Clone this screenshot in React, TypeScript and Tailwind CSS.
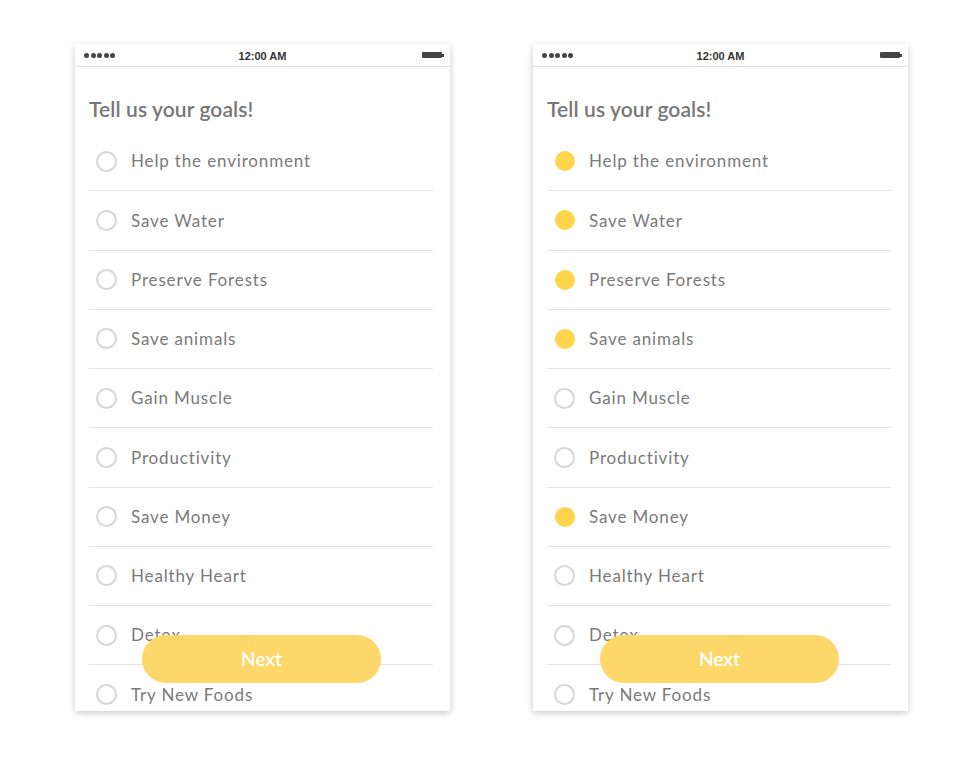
import React from "react";

const goals = [
  "Help the environment",
  "Save Water",
  "Preserve Forests",
  "Save animals",
  "Gain Muscle",
  "Productivity",
  "Save Money",
  "Healthy Heart",
  "Detox",
  "Try New Foods",
];

function Phone({ selected }: { selected: boolean[] }) {
  return (
    <div className="relative w-[375px] h-[667px] bg-white overflow-hidden shadow-[0_2px_7px_rgba(0,0,0,0.22)] shrink-0">
      <div className="h-[23px] border-b border-[#e2e2e2] flex items-center justify-between pl-[9px] pr-[6px] relative">
        <div className="flex gap-[1.5px]">
          {[0, 1, 2, 3, 4].map((i) => (
            <div key={i} className="w-[5px] h-[5px] rounded-full bg-[#444]" />
          ))}
        </div>
        <div className="absolute left-0 right-0 top-0 h-[23px] flex items-center justify-center text-[11px] font-bold text-[#333] pt-[1px] [font-family:'Liberation_Sans',Arial,sans-serif]">
          12:00 AM
        </div>
        <div className="flex items-center">
          <div className="w-[20px] h-[6px] rounded-[1px] bg-[#444]" />
          <div className="w-[2px] h-[3px] bg-[#444]" />
        </div>
      </div>
      <div className="px-[14px] [font-family:Lato,'Noto_Sans',sans-serif]">
        <div className="mt-[30px] text-[21px] leading-[24px] font-semibold text-[#777] tracking-[0.1px]">
          Tell us your goals!
        </div>
        <div className="mt-[11px] mr-[3px]">
          {goals.map((g, i) => (
            <div
              key={g}
              className={`h-[59.25px] flex items-center ${i < goals.length - 1 ? "border-b border-[#e4e4e4]" : ""}`}
            >
              <div className="ml-[7px] w-[21px] h-[21px] shrink-0 flex items-center justify-center">
                {selected[i] ? (
                  <div className="w-[20px] h-[20px] rounded-full bg-[#ffd54c]" />
                ) : (
                  <div className="w-[21px] h-[21px] rounded-full border-2 border-[#d6d6d6]" />
                )}
              </div>
              <span className="ml-[14px] text-[17px] text-[#7a7a7a] tracking-[0.85px]">{g}</span>
            </div>
          ))}
        </div>
      </div>
      <div className="absolute left-[67px] bottom-[28px] w-[239px] h-[48px] rounded-full bg-[#fdd769] flex items-center justify-center text-white text-[19px] font-semibold [font-family:Lato,'Noto_Sans',sans-serif]">
        Next
      </div>
    </div>
  );
}

export default function App() {
  return (
    <div className="w-[978px] h-[758px] bg-white flex items-start pt-[44px] pl-[75px] gap-[83px]">
      <Phone selected={goals.map(() => false)} />
      <Phone selected={[true, true, true, true, false, false, true, false, false, false]} />
    </div>
  );
}
